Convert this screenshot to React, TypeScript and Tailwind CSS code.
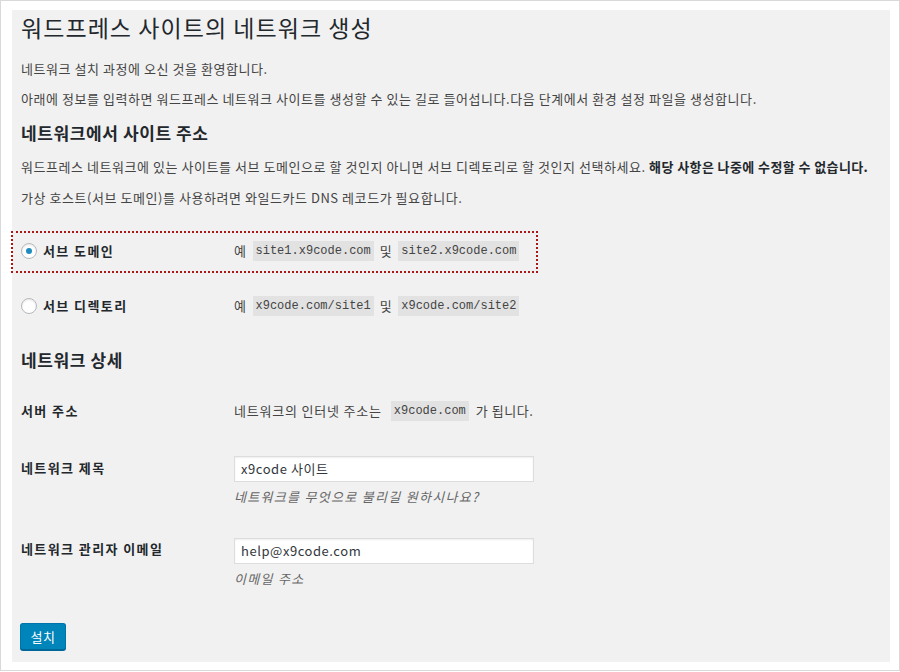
import React from "react";

const Code = ({ children }: { children: React.ReactNode }) => (
  <code className="bg-[#e2e2e2] px-[3px] h-[20px] inline-flex items-center text-[12px] tracking-normal text-[#444] font-['Liberation_Mono',monospace]">
    {children}
  </code>
);

const Radio = ({ checked }: { checked?: boolean }) => (
  <span className="w-[16px] h-[16px] rounded-full bg-white border border-[#b4b9be] shadow-[inset_0_1px_2px_rgba(0,0,0,0.1)] flex items-center justify-center shrink-0">
    {checked && <span className="w-[6px] h-[6px] rounded-full bg-[#1e8cbe]" />}
  </span>
);

export default function App() {
  return (
    <div className="w-[900px] h-[671px] border border-[#d9d9d9] bg-white pt-[9px] pl-[11px] font-['Noto_Sans_CJK_KR','Noto_Sans',sans-serif] text-[#444] text-[13px] tracking-[0.55px]">
      <div className="w-[878px] h-[652px] bg-[#f1f1f1] pl-[9px] pr-[6px] pt-[3px]">
        <h1 className="text-[23px] leading-[28px] text-[#23282d] font-normal tracking-[1.05px]">워드프레스 사이트의 네트워크 생성</h1>
        <p className="mt-[18px] leading-[20px]">네트워크 설치 과정에 오신 것을 환영합니다.</p>
        <p className="mt-[10px] leading-[20px]">아래에 정보를 입력하면 워드프레스 네트워크 사이트를 생성할 수 있는 길로 들어섭니다.다음 단계에서 환경 설정 파일을 생성합니다.</p>
        <h2 className="mt-[13px] text-[17px] leading-[22px] font-bold text-[#23282d] tracking-[0.6px]">네트워크에서 사이트 주소</h2>
        <p className="mt-[13px] leading-[20px] whitespace-nowrap">
          워드프레스 네트워크에 있는 사이트를 서브 도메인으로 할 것인지 아니면 서브 디렉토리로 할 것인지 선택하세요. <strong className="font-bold text-[#23282d] tracking-[0.4px]">해당 사항은 나중에 수정할 수 없습니다.</strong>
        </p>
        <p className="mt-[11px] leading-[20px]">가상 호스트(서브 도메인)를 사용하려면 와일드카드 DNS 레코드가 필요합니다.</p>

        <div className="mt-[23px] ml-[-10px] w-[527px] h-[42px] border-2 border-dotted border-[#a81818] flex items-center">
          <div className="w-[221px] flex items-center pl-[8px] gap-[6px] mb-[2px]">
            <Radio checked />
            <span className="font-bold text-[#23282d] leading-[20px] tracking-[1.4px]">서브 도메인</span>
          </div>
          <div className="flex items-center gap-[6px] mb-[2px]">
            <span>예</span>
            <Code>site1.x9code.com</Code>
            <span>및</span>
            <Code>site2.x9code.com</Code>
          </div>
        </div>

        <div className="mt-[23px] flex items-center h-[20px]">
          <div className="w-[213px] flex items-center gap-[6px]">
            <Radio />
            <span className="font-bold text-[#23282d] tracking-[1.4px]">서브 디렉토리</span>
          </div>
          <div className="flex items-center gap-[6px]">
            <span>예</span>
            <Code>x9code.com/site1</Code>
            <span>및</span>
            <Code>x9code.com/site2</Code>
          </div>
        </div>

        <h3 className="mt-[33px] text-[17px] leading-[22px] font-bold text-[#23282d] tracking-[0.6px]">네트워크 상세</h3>

        <div className="mt-[30px] grid grid-cols-[213px_1fr] leading-[20px]">
          <div className="font-bold text-[#23282d] tracking-[1.4px]">서버 주소</div>
          <div className="flex items-center gap-[9px]">
            <span className="tracking-[0.8px]">네트워크의 인터넷 주소는</span>
            <Code>x9code.com</Code>
            <span className="-ml-[2px]">가 됩니다.</span>
          </div>
        </div>

        <div className="mt-[35px] grid grid-cols-[213px_1fr]">
          <div className="font-bold text-[#23282d] leading-[20px] mt-[2px] tracking-[1.4px]">네트워크 제목</div>
          <div>
            <div className="w-[300px] h-[26px] bg-white border border-[#ddd] shadow-[inset_0_1px_2px_rgba(0,0,0,0.07)] px-[6px] flex items-center text-[#32373c]">x9code 사이트</div>
            <p className="mt-[5px] leading-[20px] italic text-[#666] tracking-[1.3px]">네트워크를 무엇으로 불리길 원하시나요?</p>
          </div>
        </div>

        <div className="mt-[31px] grid grid-cols-[213px_1fr]">
          <div className="font-bold text-[#23282d] leading-[20px] mt-[1px] tracking-[1.4px]">네트워크 관리자 이메일</div>
          <div>
            <div className="w-[300px] h-[26px] bg-white border border-[#ddd] shadow-[inset_0_1px_2px_rgba(0,0,0,0.07)] px-[6px] flex items-center text-[#32373c]">help@x9code.com</div>
            <p className="mt-[5px] leading-[20px] italic text-[#666] tracking-[1.3px]">이메일 주소</p>
          </div>
        </div>

        <button className="mt-[34px] ml-[-1px] w-[46px] h-[27px] rounded-[3px] bg-[#0085ba] border border-[#0073aa] border-b-[#006799] shadow-[0_1px_0_#006799] text-white text-[13px] flex items-center justify-center">
          설치
        </button>
      </div>
    </div>
  );
}
